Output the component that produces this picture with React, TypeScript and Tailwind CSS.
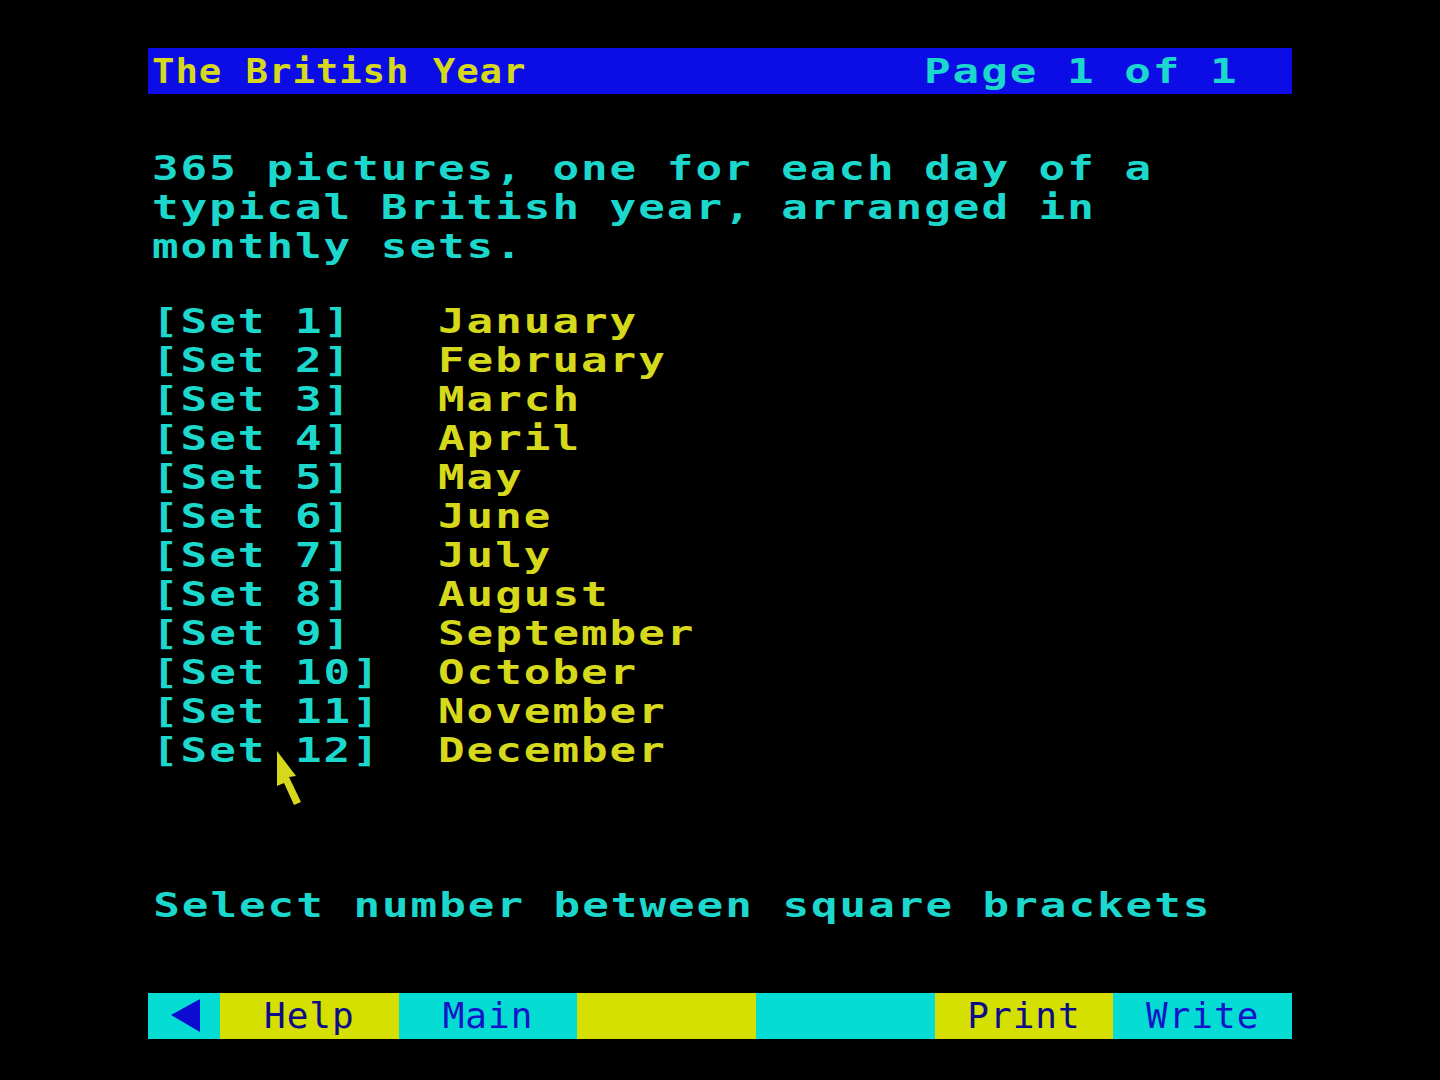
const months = [
  'January',
  'February',
  'March',
  'April',
  'May',
  'June',
  'July',
  'August',
  'September',
  'October',
  'November',
  'December',
];

// 40-column grid: 28.6px per cell, glyphs stretched sideways like the original ROM font
const wide =
  "font-['DejaVu_Sans_Mono',monospace] font-bold text-[34px] tracking-[1.53px] leading-[39px] whitespace-pre origin-left scale-x-[1.3]";

export default function App() {
  return (
    <div className="relative w-[1440px] h-[1080px] bg-black pl-[148px] pt-[48px] overflow-hidden">
      <div className="w-[1144px] flex flex-col">
        {/* title bar */}
        <div className="h-[46px] bg-[#0c0ce6] grid grid-cols-[772px_1fr] items-center pl-[4px]">
          <div className="font-['DejaVu_Sans_Mono',monospace] font-bold text-[34px] tracking-[0.8px] leading-[39px] whitespace-pre origin-left scale-x-[1.1] text-[#d6d81c]">
            The British Year
          </div>
          <div className={`${wide} text-[#1cd8cc]`}>Page 1 of 1</div>
        </div>

        {/* intro */}
        <div className="mt-[55px] pl-[4px] text-[#1cd8cc]">
          <div className={wide}>365 pictures, one for each day of a</div>
          <div className={wide}>typical British year, arranged in</div>
          <div className={wide}>monthly sets.</div>
        </div>

        {/* set list */}
        <div className="mt-[36px] pl-[4px]">
          {months.map((m, i) => (
            <div key={m} className={wide}>
              <span className="text-[#1cd8cc]">{`[Set ${i + 1}]`.padEnd(10, ' ')}</span>
              <span className="text-[#d6d81c]">{m}</span>
            </div>
          ))}
        </div>

        <div className={`${wide} mt-[116px] pl-[4px] text-[#1cd8cc]`}>
          Select number between square brackets
        </div>

        {/* function keys */}
        <div className="mt-[68px] h-[46px] flex font-['DejaVu_Sans_Mono',monospace] text-[36px] tracking-[1px] leading-[46px]">
          <div className="w-[72px] bg-[#04dcd4] flex items-center justify-center">
            <svg width="34" height="36" viewBox="0 0 34 36" className="ml-[4px]">
              <polygon points="2,17 31,1 31,34" fill="#0c0cd0" />
            </svg>
          </div>
          <div className="flex-1 bg-[#d6e000] text-center text-[#0c0c88]">Help</div>
          <div className="flex-1 bg-[#04dcd4] text-center text-[#1414c8]">Main</div>
          <div className="flex-1 bg-[#d6e000]" />
          <div className="flex-1 bg-[#04dcd4]" />
          <div className="flex-1 bg-[#d6e000] text-center text-[#0c0c88]">Print</div>
          <div className="flex-1 bg-[#04dcd4] text-center text-[#1414c8]">Write</div>
        </div>
      </div>

      {/* mouse pointer */}
      <svg
        className="absolute left-[266px] top-[745px]"
        width="45"
        height="65"
        viewBox="0 0 45 65"
      >
        <polygon
          points="11,6 30,31 23,32 35,57 28,60 18,38 11,41"
          fill="#d6d81c"
        />
      </svg>
    </div>
  );
}
